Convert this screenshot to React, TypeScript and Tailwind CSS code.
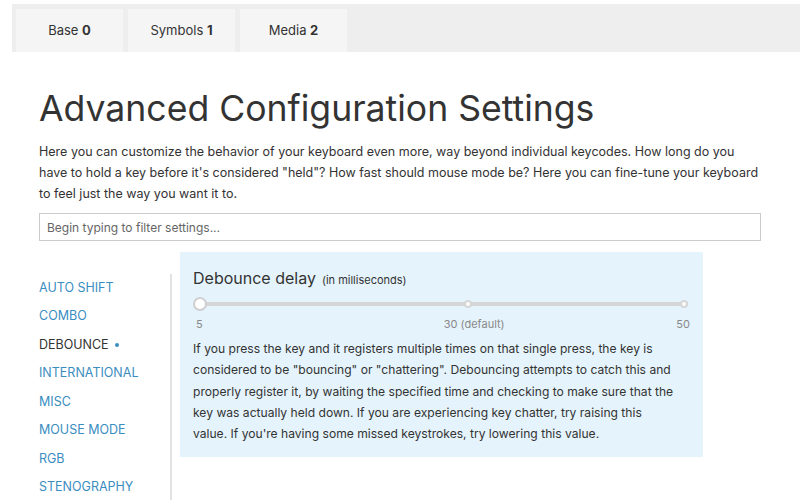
import React from 'react';

const sections = ['AUTO SHIFT', 'COMBO', 'DEBOUNCE', 'INTERNATIONAL', 'MISC', 'MOUSE MODE', 'RGB', 'STENOGRAPHY'];

const layers = [
  { name: 'Base', n: 0 },
  { name: 'Symbols', n: 1 },
  { name: 'Media', n: 2 },
];

export default function App() {
  return (
    <div className="h-[500px] w-[800px] overflow-hidden bg-white text-[#333] font-['Inter',sans-serif]">
      {/* Layer tabs */}
      <div className="pt-1 pl-3">
        <div className="flex h-12 gap-[5px] bg-[#eeeeee] pl-1 pt-[5px]">
          {layers.map((l) => (
            <div key={l.name} className="flex w-[107px] items-center justify-center bg-[#f5f5f5] text-[13px] text-[#333]">
              {l.name}&nbsp;<strong>{l.n}</strong>
            </div>
          ))}
        </div>
      </div>

      <div className="px-[39px]">
        <h1 className="mt-[37px] text-[35.6px] leading-[40px] font-normal text-[#333]">
          Advanced Configuration Settings
        </h1>
        <p className="mt-[12px] text-[12.5px] leading-[21px] text-[#333]">
          Here you can customize the behavior of your keyboard even more, way beyond individual keycodes. How long do you
          have to hold a key before it's considered "held"? How fast should mouse mode be? Here you can fine-tune your keyboard
          to feel just the way you want it to.
        </p>
        <input
          className="mt-[9px] block h-[28px] w-full border border-[#cccccc] px-[7px] text-[12px] text-[#333] outline-none placeholder:text-[#666]"
          placeholder="Begin typing to filter settings..."
        />

        <div className="mt-[11px] flex">
          {/* Section list */}
          <div className="mt-[22px] flex h-[230px] w-[133px] flex-col border-r-2 border-[#e2e2e2]">
            {sections.map((s) => (
              <div
                key={s}
                className={
                  'flex h-[28.5px] shrink-0 items-center text-[12.5px] ' +
                  (s === 'DEBOUNCE' ? 'text-[#333]' : 'text-[#3a8dbf]')
                }
              >
                {s}
                {s === 'DEBOUNCE' && <span className="ml-[6px] inline-block h-[4px] w-[4px] rounded-full bg-[#3a8dbf]" />}
              </div>
            ))}
          </div>

          {/* Setting card */}
          <div className="ml-[8px] flex h-[205px] w-[523px] flex-col bg-[#e5f3fc] px-[13px] pt-[14px]">
            <div className="flex items-baseline gap-[6px]">
              <span className="text-[16px] text-[#333]">Debounce delay</span>
              <span className="text-[11px] text-[#333]">(in milliseconds)</span>
            </div>
            <div className="relative mx-[6px] mt-[7px] h-[14px]">
              <div className="absolute left-0 right-0 top-[5px] h-[4px] rounded bg-[#d6d6d6]" />
              <div className="absolute left-[-6px] top-0 h-[14px] w-[14px] rounded-full border-2 border-[#cfcfcf] bg-white" />
              <div className="absolute left-[calc(55.5%-4px)] top-[3px] h-[8px] w-[8px] rounded-full border-2 border-[#d6d6d6] bg-white" />
              <div className="absolute right-[-4px] top-[3px] h-[8px] w-[8px] rounded-full border-2 border-[#d6d6d6] bg-white" />
            </div>
            <div className="mt-[6px] flex h-[14px] text-[11px] leading-[14px] text-[#888]">
              <span className="ml-[3px]">5</span>
              <span className="ml-[241px]">30 (default)</span>
              <span className="ml-auto">50</span>
            </div>
            <p className="mt-[7px] pr-[12px] text-[12.1px] leading-[21.3px] text-[#333]">
              If you press the key and it registers multiple times on that single press, the key is considered to be
              "bouncing" or "chattering". Debouncing attempts to catch this and properly register it, by waiting the
              specified time and checking to make sure that the key was actually held down. If you are experiencing key
              chatter, try raising this value. If you're having some missed keystrokes, try lowering this value.
            </p>
          </div>
        </div>
      </div>
    </div>
  );
}
